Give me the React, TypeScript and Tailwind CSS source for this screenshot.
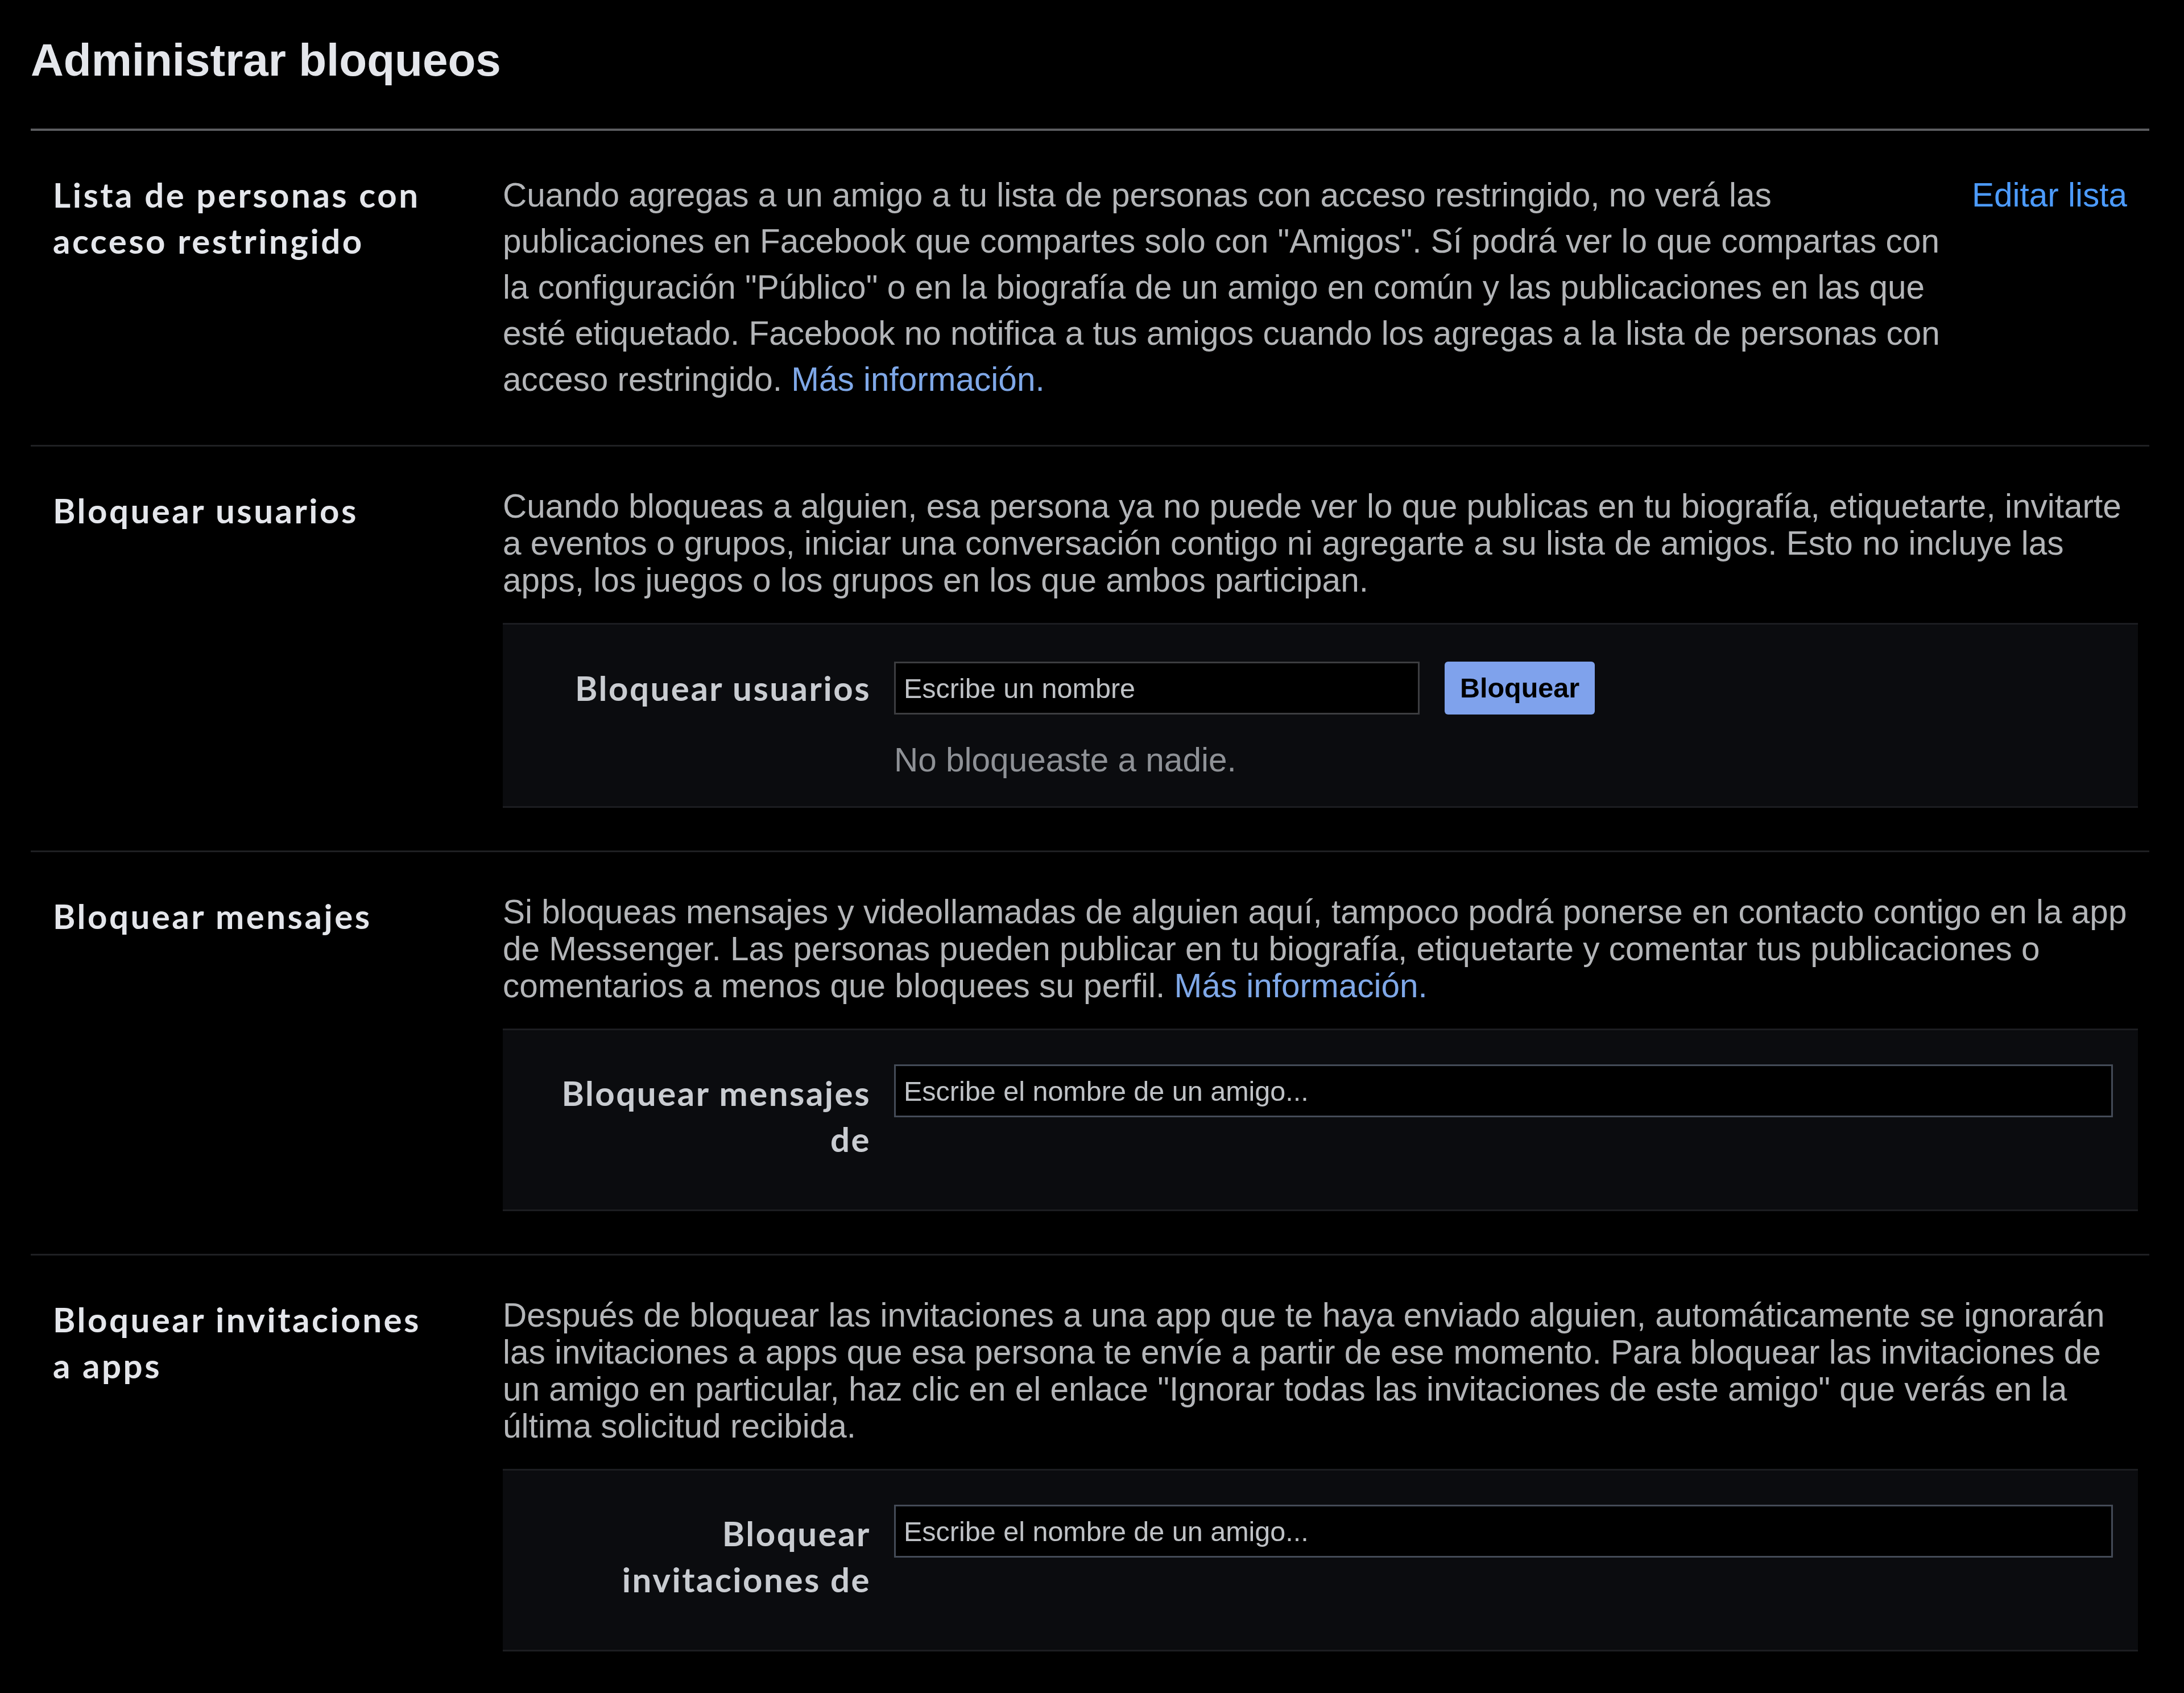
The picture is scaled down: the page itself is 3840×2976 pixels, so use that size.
const labelCls = "font-['Lato',sans-serif] font-bold text-[60px] leading-[81px] tracking-[3.5px] text-[#e4e6eb]";
const boxLabelCls = "w-[580px] shrink-0 text-right font-['Lato',sans-serif] font-bold text-[60px] leading-[81px] tracking-[2.5px] text-[#c9ccd1]";
const descCls = "text-[58.5px] text-[#b3b5b8]";
const linkCls = "text-[#7fa8e8]";
const boxCls = "mt-[43px] bg-[#0b0c0f] border-y-[3px] border-[#1c1d21] pl-[67px] pr-[44px]";

function Section({ label, children, last }: { label: React.ReactNode; children: React.ReactNode; last?: boolean }) {
  return (
    <section
      className={`grid grid-cols-[791px_1fr] pl-[39px] pr-[20px] pt-[72px] pb-[75px] ${last ? '' : 'border-b-[3px] border-[#1f2023]'}`}
    >
      <h3 className={`${labelCls} w-[665px]`}>{label}</h3>
      <div>{children}</div>
    </section>
  );
}

function NameInput({ placeholder, wide }: { placeholder: string; wide?: boolean }) {
  return (
    <input
      type="text"
      placeholder={placeholder}
      className={`h-[93px] border-[3px] bg-black px-[14px] text-[48.5px] text-[#e4e6eb] placeholder:text-[#bfc2c6] outline-none ${
        wide ? 'flex-1 border-[#444b57]' : 'w-[924px] border-[#3c3d40]'
      }`}
    />
  );
}

export default function App() {
  return (
    <div className="min-h-screen bg-black font-['Liberation_Sans',Arial,sans-serif]">
      <div className="pl-[54px] pr-[61px]">
        <h1 className="pt-[60px] pb-[74px] text-[80px] leading-[92px] font-bold text-[#e4e6eb]">
          Administrar bloqueos
        </h1>

        <div className="border-t-[4px] border-[#5c5d60]">
          <Section label="Lista de personas con acceso restringido">
            <div className="flex items-start">
              <p className={`${descCls} leading-[81px] w-[2570px]`}>
                Cuando agregas a un amigo a tu lista de personas con acceso restringido, no verá las publicaciones en
                Facebook que compartes solo con "Amigos". Sí podrá ver lo que compartas con la configuración "Público" o
                en la biografía de un amigo en común y las publicaciones en las que esté etiquetado. Facebook no
                notifica a tus amigos cuando los agregas a la lista de personas con acceso restringido.{' '}
                <a className={linkCls}>Más información.</a>
              </p>
              <a className="ml-auto pr-[19px] text-[58.5px] leading-[81px] text-[#4c9bff]">Editar lista</a>
            </div>
          </Section>

          <Section label="Bloquear usuarios">
            <p className={`${descCls} leading-[65px]`}>
              Cuando bloqueas a alguien, esa persona ya no puede ver lo que publicas en tu biografía, etiquetarte,
              invitarte a eventos o grupos, iniciar una conversación contigo ni agregarte a su lista de amigos. Esto no
              incluye las apps, los juegos o los grupos en los que ambos participan.
            </p>
            <div className={`${boxCls} pt-[65px] pb-[41px]`}>
              <div className="flex items-start">
                <label className={`${boxLabelCls} pt-[6px]`}>Bloquear usuarios</label>
                <div className="ml-[41px] flex-1">
                  <div className="flex items-center gap-[44px]">
                    <NameInput placeholder="Escribe un nombre" />
                    <button className="h-[93px] w-[264px] rounded-[6px] bg-[#7fa2ec] text-[48.5px] font-bold text-black">
                      Bloquear
                    </button>
                  </div>
                  <p className="mt-[39px] text-[58.5px] leading-[81px] text-[#8e9196]">No bloqueaste a nadie.</p>
                </div>
              </div>
            </div>
          </Section>

          <Section label="Bloquear mensajes">
            <p className={`${descCls} leading-[65px]`}>
              Si bloqueas mensajes y videollamadas de alguien aquí, tampoco podrá ponerse en contacto contigo en la app
              de Messenger. Las personas pueden publicar en tu biografía, etiquetarte y comentar tus publicaciones o
              comentarios a menos que bloquees su perfil. <a className={linkCls}>Más información.</a>
            </p>
            <div className={`${boxCls} pt-[60px] pb-[83px]`}>
              <div className="flex items-start">
                <label className={`${boxLabelCls} pt-[10px]`}>Bloquear mensajes de</label>
                <div className="ml-[41px] flex flex-1">
                  <NameInput placeholder="Escribe el nombre de un amigo..." wide />
                </div>
              </div>
            </div>
          </Section>

          <Section label="Bloquear invitaciones a apps" last>
            <p className={`${descCls} leading-[65px]`}>
              Después de bloquear las invitaciones a una app que te haya enviado alguien, automáticamente se ignorarán
              las invitaciones a apps que esa persona te envíe a partir de ese momento. Para bloquear las invitaciones
              de un amigo en particular, haz clic en el enlace "Ignorar todas las invitaciones de este amigo" que verás
              en la última solicitud recibida.
            </p>
            <div className={`${boxCls} pt-[60px] pb-[83px]`}>
              <div className="flex items-start">
                <label className={`${boxLabelCls} pt-[10px]`}>Bloquear invitaciones de</label>
                <div className="ml-[41px] flex flex-1">
                  <NameInput placeholder="Escribe el nombre de un amigo..." wide />
                </div>
              </div>
            </div>
          </Section>
        </div>
      </div>
    </div>
  );
}
